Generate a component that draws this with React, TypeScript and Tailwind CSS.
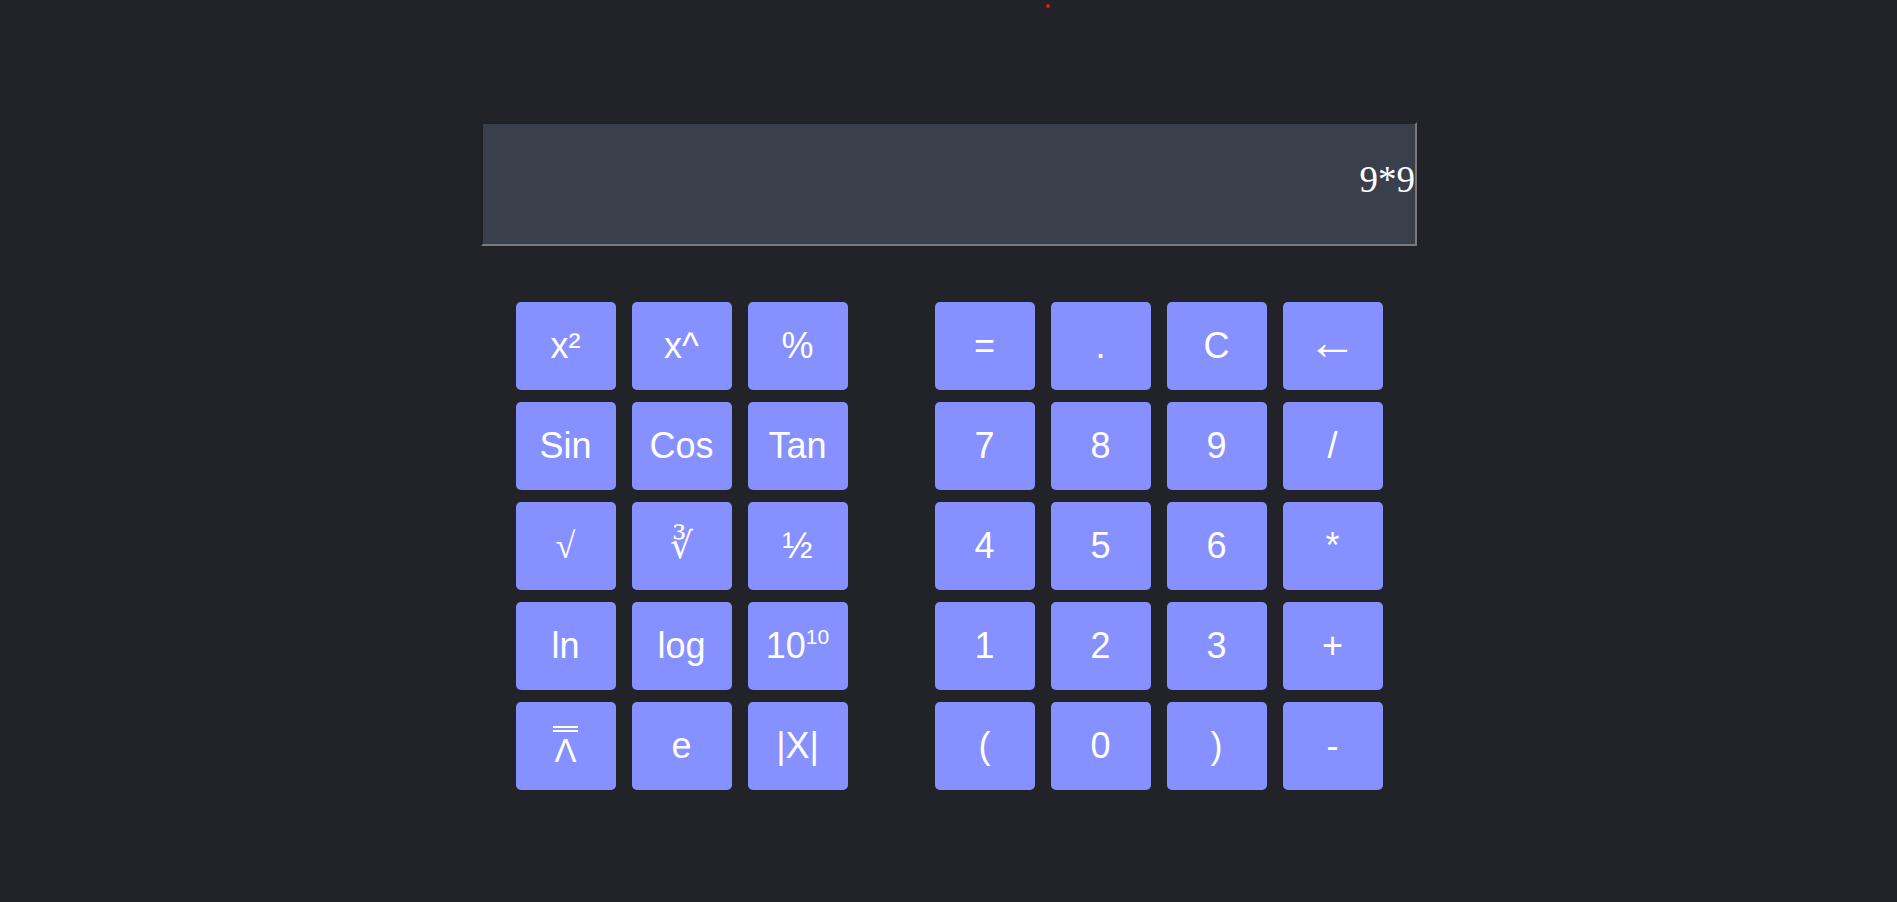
import React from 'react'

// "10 to the power 10" key, with a real superscript
const TenPow = (
  <span className="flex items-start">
    10<span className="text-[21px] leading-none -mt-[2px]">10</span>
  </span>
)

// logical-and with a double bar above it
const DoubleBarLambda = (
  <span className="flex flex-col items-center">
    <span className="block w-[25px] h-[2px] bg-white" />
    <span className="block w-[25px] h-[2px] bg-white mt-[2px]" />
    <span className="text-[33px] leading-none mt-[2px]">Λ</span>
  </span>
)

const SERIF = "font-['Liberation_Serif','DejaVu_Serif',serif]"

const SCI_KEYS: { id: string; label: React.ReactNode; cls?: string }[] = [
  { id: 'sq', label: 'x²' },
  { id: 'pow', label: 'x^' },
  { id: 'pct', label: '%' },
  { id: 'sin', label: 'Sin' },
  { id: 'cos', label: 'Cos' },
  { id: 'tan', label: 'Tan' },
  { id: 'sqrt', label: '√', cls: SERIF },
  { id: 'cbrt', label: '∛', cls: SERIF },
  { id: 'half', label: '½' },
  { id: 'ln', label: 'ln' },
  { id: 'log', label: 'log' },
  { id: 'ten', label: TenPow },
  { id: 'pi', label: DoubleBarLambda },
  { id: 'e', label: 'e' },
  { id: 'abs', label: '|X|' },
]

const NUM_KEYS: { id: string; label: React.ReactNode; cls?: string }[] = [
  { id: 'eq', label: '=' },
  { id: 'dot', label: '.' },
  { id: 'clr', label: 'C' },
  { id: 'back', label: <span className="-mt-[9px]">←</span>, cls: "font-['DejaVu_Sans',sans-serif] text-[50px]" },
  ...['7', '8', '9', '/', '4', '5', '6', '*', '1', '2', '3', '+', '(', '0', ')', '-'].map((k) => ({ id: k, label: k })),
]

function Key({ label, cls }: { label: React.ReactNode; cls?: string }) {
  return (
    <button
      className={`w-[100px] h-[88px] rounded-[5px] bg-[#8690fe] text-white text-[36px] leading-none flex items-center justify-center font-['Liberation_Sans',Arial,sans-serif] ${cls ?? ''}`}
    >
      {label}
    </button>
  )
}

export default function App() {
  return (
    <div className="relative min-h-[902px] w-full bg-[#212328] pt-[122px] pl-[1px]">
      {/* little red dot at the top */}
      <span className="absolute left-[1046px] top-[4px] w-[4px] h-[4px] rounded-full bg-[#f01010]" />

      <div className="mx-auto w-[936px]">
        {/* Display */}
        <div className="h-[124px] bg-[#393f4b] border-2 border-t-[#1e2126] border-l-[#1e2126] border-b-[#7a7a7a] border-r-[#7a7a7a] flex items-center justify-end">
          <span className="text-white text-[37px] font-['Liberation_Serif','Times_New_Roman',serif] -mt-[8px]">9*9</span>
        </div>

        {/* Keypads */}
        <div className="mt-[56px] flex justify-center gap-[87px]">
          <div className="grid grid-cols-3 gap-x-4 gap-y-3">
            {SCI_KEYS.map((k) => (
              <Key key={k.id} label={k.label} cls={k.cls} />
            ))}
          </div>
          <div className="grid grid-cols-4 gap-x-4 gap-y-3">
            {NUM_KEYS.map((k) => (
              <Key key={k.id} label={k.label} cls={k.cls} />
            ))}
          </div>
        </div>
      </div>
    </div>
  )
}
